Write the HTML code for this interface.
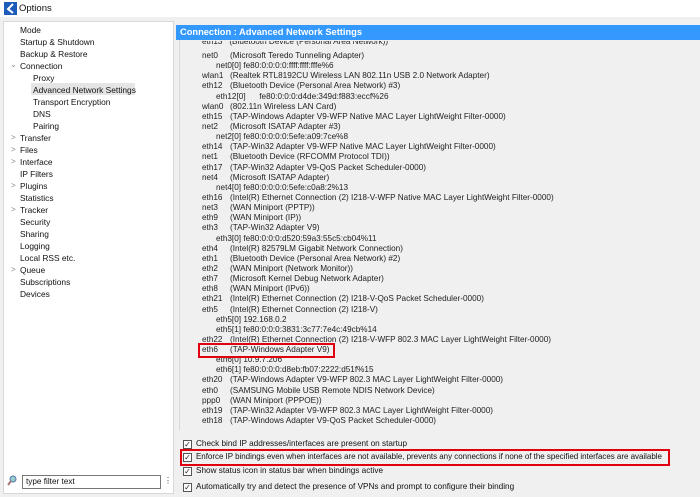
<!DOCTYPE html>
<html><head><meta charset="utf-8"><style>
*{margin:0;padding:0;box-sizing:border-box}
body{width:700px;height:497px;background:#f0f0f0;font-family:"Liberation Sans",sans-serif;font-size:9px;color:#111;position:relative;overflow:hidden}
.a{position:absolute;white-space:nowrap}
#title{left:0;top:0;width:700px;height:17px;background:#fff}
#left{left:3px;top:21px;width:171px;height:473px;background:#fff;border:1px solid #d8d8d8}
.t{position:absolute;font-size:8.4px;line-height:12px;white-space:nowrap}
.chev{position:absolute;color:#888;font-size:8px}
#hdr{left:176px;top:25px;width:524px;height:15px;background:#3399ff;color:#fff;font-weight:bold;font-size:9.3px;line-height:15px;padding-left:4px}
#vline{left:179px;top:40px;width:1px;height:390px;background:#d8d8d8}
.l{position:absolute;font-size:8.2px;line-height:10px;color:#222;white-space:nowrap}
.cb{position:absolute;width:9px;height:9px;border:1px solid #555;background:#fff;font-size:8px;line-height:7px;text-align:center;color:#222}
.ct{position:absolute;font-size:8.2px;line-height:11px;color:#111;white-space:nowrap}
.red{position:absolute;border:2px solid #e00010}
</style></head><body>
<div class="a" id="title"><svg style="position:absolute;left:4px;top:2px" width="13" height="13"><rect width="13" height="13" fill="#1d5cb8"/><path d="M9 2 L4 7 L9 11" stroke="#fff" stroke-width="2" fill="none"/></svg><span style="position:absolute;left:19px;top:3px;font-size:9.5px">Options</span></div>
<div class="a" id="left">
<div style="position:absolute;left:27px;top:61px;width:104px;height:12px;background:#e5e5e5"></div>
<div class="t" style="left:16px;top:2px">Mode</div>
<div class="t" style="left:16px;top:14px">Startup &amp; Shutdown</div>
<div class="t" style="left:16px;top:26px">Backup &amp; Restore</div>
<div class="chev" style="left:6px;top:38px">&#8964;</div>
<div class="t" style="left:16px;top:38px">Connection</div>
<div class="t" style="left:29px;top:50px">Proxy</div>
<div class="t" style="left:29px;top:62px">Advanced Network Settings</div>
<div class="t" style="left:29px;top:74px">Transport Encryption</div>
<div class="t" style="left:29px;top:86px">DNS</div>
<div class="t" style="left:29px;top:98px">Pairing</div>
<div class="chev" style="left:7px;top:111px">&gt;</div><div class="t" style="left:16px;top:110px">Transfer</div>
<div class="chev" style="left:7px;top:123px">&gt;</div><div class="t" style="left:16px;top:122px">Files</div>
<div class="chev" style="left:7px;top:135px">&gt;</div><div class="t" style="left:16px;top:134px">Interface</div>
<div class="t" style="left:16px;top:146px">IP Filters</div>
<div class="chev" style="left:7px;top:159px">&gt;</div><div class="t" style="left:16px;top:158px">Plugins</div>
<div class="t" style="left:16px;top:170px">Statistics</div>
<div class="chev" style="left:7px;top:183px">&gt;</div><div class="t" style="left:16px;top:182px">Tracker</div>
<div class="t" style="left:16px;top:194px">Security</div>
<div class="t" style="left:16px;top:206px">Sharing</div>
<div class="t" style="left:16px;top:218px">Logging</div>
<div class="t" style="left:16px;top:230px">Local RSS etc.</div>
<div class="chev" style="left:7px;top:243px">&gt;</div><div class="t" style="left:16px;top:242px">Queue</div>
<div class="t" style="left:16px;top:254px">Subscriptions</div>
<div class="t" style="left:16px;top:266px">Devices</div>
<svg style="position:absolute;left:3px;top:453px" width="11" height="11"><circle cx="6" cy="4" r="3" fill="#9cc" stroke="#57a"/><path d="M4 6 L1 10" stroke="#a77" stroke-width="2"/></svg>
<div style="position:absolute;left:18px;top:453px;width:139px;height:14px;border:1px solid #777;font-size:8.2px;line-height:12px;padding-left:3px">type filter text</div>
<div style="position:absolute;left:160px;top:454px;font-size:8px;color:#333">&#8942;</div>
</div>
<div class="a" id="hdr">Connection : Advanced Network Settings</div>
<div class="a" id="vline"></div>
<div id="list">
<div class="l" style="left:202px;top:41px;height:6px;overflow:hidden;line-height:2px">eth13&nbsp;&nbsp;&nbsp;(Bluetooth Device (Personal Area Network))</div>
</div>
<div class="red" style="left:198px;top:343px;width:137px;height:15px"></div>
<div class="cb" style="left:183px;top:440px">✓</div><div class="ct" style="left:196px;top:438px">Check bind IP addresses/interfaces are present on startup</div>
<div class="cb" style="left:183px;top:453px">✓</div><div class="ct" style="left:196px;top:451px;font-size:8px;letter-spacing:-0.03px">Enforce IP bindings even when interfaces are not available, prevents any connections if none of the specified interfaces are available</div>
<div class="red" style="left:180px;top:449px;width:490px;height:17px"></div>
<div class="cb" style="left:183px;top:467px">✓</div><div class="ct" style="left:196px;top:465px">Show status icon in status bar when bindings active</div>
<div class="cb" style="left:183px;top:483px">✓</div><div class="ct" style="left:196px;top:481px">Automatically try and detect the presence of VPNs and prompt to configure their binding</div>
<script>
var L=[["net0","(Microsoft Teredo Tunneling Adapter)"],["*net0[0] fe80:0:0:0:0:ffff:ffff:fffe%6"],["wlan1","(Realtek RTL8192CU Wireless LAN 802.11n USB 2.0 Network Adapter)"],["eth12","(Bluetooth Device (Personal Area Network) #3)"],["*eth12[0]&nbsp;&nbsp;&nbsp;&nbsp;&nbsp;&nbsp;fe80:0:0:0:d4de:349d:f883:eccf%26"],["wlan0","(802.11n Wireless LAN Card)"],["eth15","(TAP-Windows Adapter V9-WFP Native MAC Layer LightWeight Filter-0000)"],["net2","(Microsoft ISATAP Adapter #3)"],["*net2[0] fe80:0:0:0:0:5efe:a09:7ce%8"],["eth14","(TAP-Win32 Adapter V9-WFP Native MAC Layer LightWeight Filter-0000)"],["net1","(Bluetooth Device (RFCOMM Protocol TDI))"],["eth17","(TAP-Win32 Adapter V9-QoS Packet Scheduler-0000)"],["net4","(Microsoft ISATAP Adapter)"],["*net4[0] fe80:0:0:0:0:5efe:c0a8:2%13"],["eth16","(Intel(R) Ethernet Connection (2) I218-V-WFP Native MAC Layer LightWeight Filter-0000)"],["net3","(WAN Miniport (PPTP))"],["eth9","(WAN Miniport (IP))"],["eth3","(TAP-Win32 Adapter V9)"],["*eth3[0] fe80:0:0:0:d520:59a3:55c5:cb04%11"],["eth4","(Intel(R) 82579LM Gigabit Network Connection)"],["eth1","(Bluetooth Device (Personal Area Network) #2)"],["eth2","(WAN Miniport (Network Monitor))"],["eth7","(Microsoft Kernel Debug Network Adapter)"],["eth8","(WAN Miniport (IPv6))"],["eth21","(Intel(R) Ethernet Connection (2) I218-V-QoS Packet Scheduler-0000)"],["eth5","(Intel(R) Ethernet Connection (2) I218-V)"],["*eth5[0] 192.168.0.2"],["*eth5[1] fe80:0:0:0:3831:3c77:7e4c:49cb%14"],["eth22","(Intel(R) Ethernet Connection (2) I218-V-WFP 802.3 MAC Layer LightWeight Filter-0000)"],["eth6","(TAP-Windows Adapter V9)"],["*eth6[0] 10.9.7.206"],["*eth6[1] fe80:0:0:0:d8eb:fb07:2222:d51f%15"],["eth20","(TAP-Windows Adapter V9-WFP 802.3 MAC Layer LightWeight Filter-0000)"],["eth0","(SAMSUNG Mobile USB Remote NDIS Network Device)"],["ppp0","(WAN Miniport (PPPOE))"],["eth19","(TAP-Win32 Adapter V9-WFP 802.3 MAC Layer LightWeight Filter-0000)"],["eth18","(TAP-Windows Adapter V9-QoS Packet Scheduler-0000)"]];
var h="";L.forEach(function(r,i){var y=51+i*10.14;if(r[0][0]=="*"){h+='<div class="l" style="left:216px;top:'+y+'px">'+r[0].slice(1)+'</div>';}else{h+='<div class="l" style="left:202px;top:'+y+'px">'+r[0]+'</div><div class="l" style="left:230px;top:'+y+'px">'+r[1]+'</div>';}});
document.getElementById("list").insertAdjacentHTML("beforeend",h);
</script>
</body></html>
